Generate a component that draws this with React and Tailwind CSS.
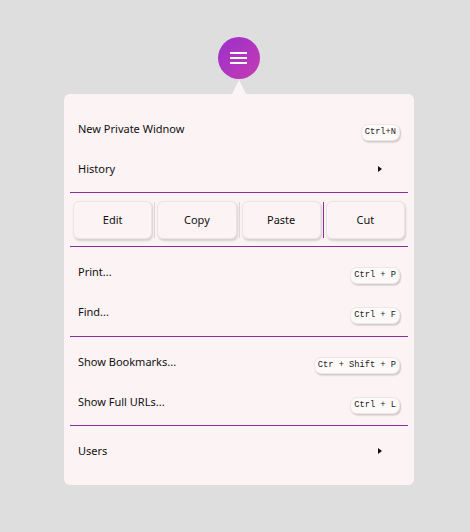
import React from "react";

const Kbd = ({ children }) => (
  <span className="mt-[6px] inline-flex h-[17px] items-center rounded-[7px] border border-[#ece6e6] bg-[#fffafa] px-[3px] text-[8.7px] leading-none text-[#222] shadow-[1px_1.5px_1.5px_rgba(0,0,0,0.18)] [font-family:'Liberation_Mono',monospace]">
    {children}
  </span>
);

const Arrow = () => (
  <span className="mr-[18px] inline-block h-0 w-0 border-y-[3.5px] border-l-[4px] border-y-transparent border-l-[#111]" />
);

const Row = ({ label, right }) => (
  <div className="flex h-[40px] items-center justify-between pl-[14px] pr-[14px]">
    <span className="text-[11px] text-[#111]">{label}</span>
    {right}
  </div>
);

const Divider = ({ className }) => (
  <div className={"mx-[6px] h-px bg-[#8a2e9c] " + className} />
);

const Btn = ({ children }) => (
  <div className="flex h-[38px] flex-1 items-center justify-center rounded-[6px] border border-[#ece4e4] bg-[#fcf4f4] text-[11px] text-[#111] shadow-[1px_1.5px_2px_rgba(0,0,0,0.15)]">
    {children}
  </div>
);

export default function App() {
  return (
    <div className="flex min-h-[532px] w-[470px] flex-col items-center bg-[#dedede] pl-[8px] pt-[37px] [font-family:'Noto_Sans',sans-serif]">
      <div className="ml-[-1px] flex h-[42px] w-[42px] items-center justify-center rounded-full bg-[linear-gradient(135deg,#9a2fcb,#c63cb3)]">
        <div className="flex flex-col gap-[3px]">
          <div className="h-[2px] w-[17px] bg-white" />
          <div className="h-[2px] w-[17px] bg-white" />
          <div className="h-[2px] w-[17px] bg-white" />
        </div>
      </div>
      <div className="ml-[-1px] mt-[1px] h-0 w-0 border-x-[7px] border-b-[14px] border-x-transparent border-b-[#fcf3f4]" />
      <div className="w-[350px] rounded-[6px] bg-[#fcf3f4] pb-[14px] pt-[15px]">
        <Row label="New Private Widnow" right={<Kbd>Ctrl+N</Kbd>} />
        <Row label="History" right={<Arrow />} />
        <Divider className="mt-[3px]" />
        <div className="mx-[6px] mt-[8px] flex items-center gap-[2px] px-[3px]">
          <Btn>Edit</Btn>
          <div className="h-[36px] w-px bg-[#ddd6d6]" />
          <Btn>Copy</Btn>
          <div className="h-[36px] w-px bg-[#ddd6d6]" />
          <Btn>Paste</Btn>
          <div className="h-[36px] w-px bg-[#8a2e9c]" />
          <Btn>Cut</Btn>
        </div>
        <Divider className="mt-[7px] mb-[5px]" />
        <Row label="Print..." right={<Kbd>Ctrl + P</Kbd>} />
        <Row label="Find..." right={<Kbd>Ctrl + F</Kbd>} />
        <Divider className="mt-[4px] mb-[5px]" />
        <Row label="Show Bookmarks..." right={<Kbd>Ctr + Shift + P</Kbd>} />
        <Row label="Show Full URLs..." right={<Kbd>Ctrl + L</Kbd>} />
        <Divider className="mt-[3px] mb-[5px]" />
        <Row label="Users" right={<Arrow />} />
      </div>
    </div>
  );
}
